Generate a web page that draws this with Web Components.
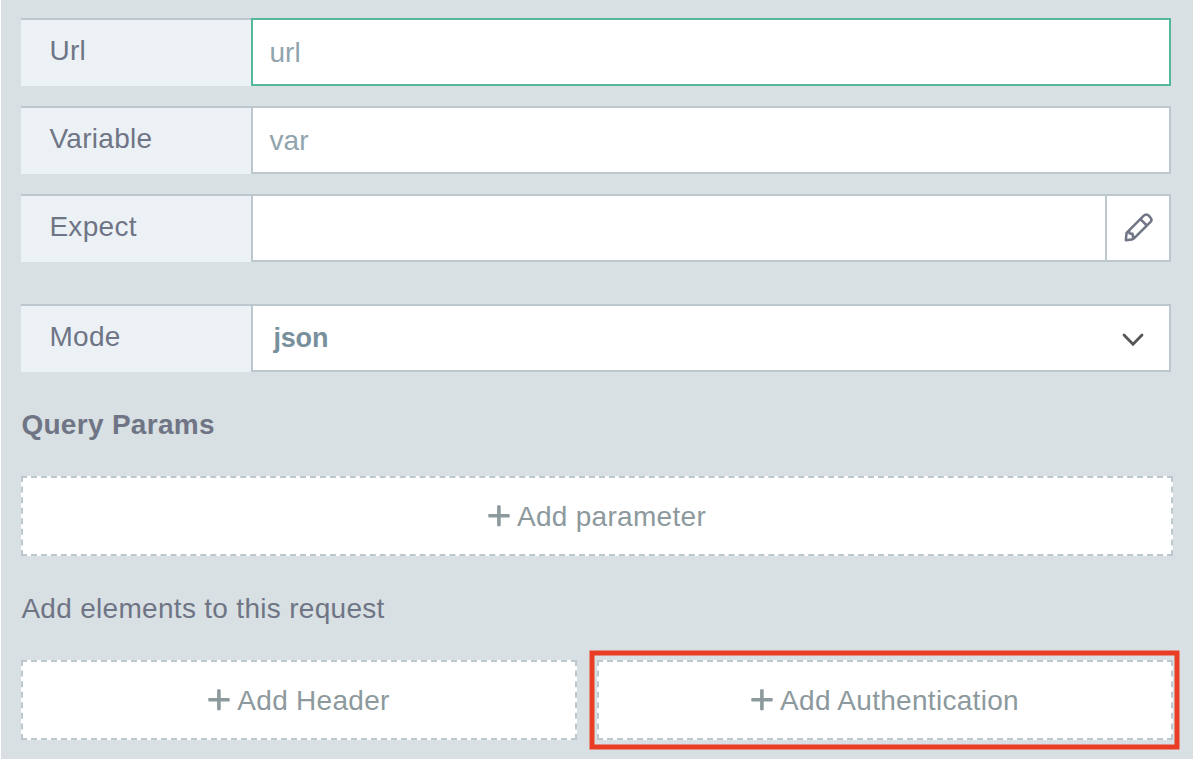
<!DOCTYPE html>
<html lang="en"><head><meta charset="utf-8"><title>Request editor</title>
<style>
html{background:#fff}
body{margin:0;height:759px;overflow:hidden;font:28px/32px "Liberation Sans",Arial,sans-serif;letter-spacing:.3px;color:#6f7585}
</style></head><body>
<request-form></request-form>
<script>
const define=(name,html)=>customElements.define(name,class extends HTMLElement{
  constructor(){super();this.attachShadow({mode:'open'}).innerHTML=html;}
});

define('form-row',`<style>
:host{display:flex;height:68px;margin-bottom:20px;width:1150px;--line:#bcc7ce}
:host([active]){--line:#56b89b}
.label{box-sizing:border-box;width:230px;border-top:2px solid #bcc7ce;background:#ecf1f6;padding:15px 0 0 28.4px}
.control{box-sizing:border-box;flex:1;display:flex;border:2px solid var(--line);background:#fff}
</style><div class="label"><slot name="label"></slot></div><div class="control"><slot></slot></div>`);

define('text-value',`<style>
:host{flex:1;padding:17px 0 0 16.4px;color:#90a4ae;letter-spacing:.1px}
:host([selected]){padding:16px 0 0 20.5px;font-size:27px;font-weight:bold;color:#78909c;letter-spacing:-.2px}
</style><slot></slot>`);

define('edit-button',`<style>
:host{box-sizing:border-box;width:65px;border-left:2px solid #bcc7ce;display:block;padding:17px 0 0 17px;margin-right:-1px}
svg{display:block}
</style><svg width="30" height="30" viewBox="0 0 30 30" fill="none" stroke="#6f7585" stroke-width="2.5" stroke-linejoin="round" stroke-linecap="round"><path d="M1.8 27.2 2.6 19.8 19.8 2.6Q22.4.3 24.8 2.7L26.3 4.3Q28.7 6.7 26.3 9.2L10 25.3 7.6 26.6ZM16.4 6.2 22.8 12.5M2.8 19.8 5.1 18.2 5.7 20.4 8.6 20.8 8.8 23.6 11 24.2"/></svg>`);

define('chevron-icon',`<style>
:host{display:block;padding:27px 25px 0 0}svg{display:block}
</style><svg width="22" height="14" viewBox="0 0 22 14" fill="none" stroke="#555" stroke-width="2.8" stroke-linecap="round"><path d="M2 2 11 11.2 20 2"/></svg>`);

define('add-button',`<style>
:host{box-sizing:border-box;height:80px;display:flex;justify-content:center;align-items:center;gap:7px;border:2px dashed #bcc7ce;background:#fff;color:#8c999d;position:relative}
span{padding-top:2px}
.plus{width:22px;height:22px;display:block;fill:#8c999d}
.ring{display:none}
:host([highlight]) .ring{display:block;position:absolute;left:-10px;top:-12px}
</style><svg class="plus" viewBox="0 0 22 22"><rect x="9.1" y=".2" width="3.6" height="21" rx=".7"/><rect x=".3" y="9" width="21.4" height="3.4" rx=".7"/></svg>
<span><slot></slot></span>
<svg class="ring" width="592" height="102" viewBox="0 0 592 102"><rect x="3" y="3" width="585" height="94" fill="none" stroke="#e93e25" stroke-width="5"/></svg>`);

define('request-form',`<style>
:host{display:block;box-sizing:border-box;height:759px;margin-left:1px;padding:18px 20px 0;background:#d8e0e3}
.mode{margin-top:42px}
h2{font-size:28px;line-height:32px;margin:37px 0 35px}
p{margin:37px 0 35px}
h2,p{padding-left:.4px}
.actions{display:grid;grid-template-columns:556px 576px;gap:20px}
.wide{width:1152px}
</style>
<form-row active><span slot="label">Url</span><text-value>url</text-value></form-row>
<form-row><span slot="label">Variable</span><text-value>var</text-value></form-row>
<form-row><span slot="label">Expect</span><text-value></text-value><edit-button></edit-button></form-row>
<form-row class="mode"><span slot="label">Mode</span><text-value selected>json</text-value><chevron-icon></chevron-icon></form-row>
<h2>Query Params</h2>
<add-button class="wide">Add parameter</add-button>
<p>Add elements to this request</p>
<div class="actions"><add-button>Add Header</add-button><add-button highlight>Add Authentication</add-button></div>`);
</script></body></html>
